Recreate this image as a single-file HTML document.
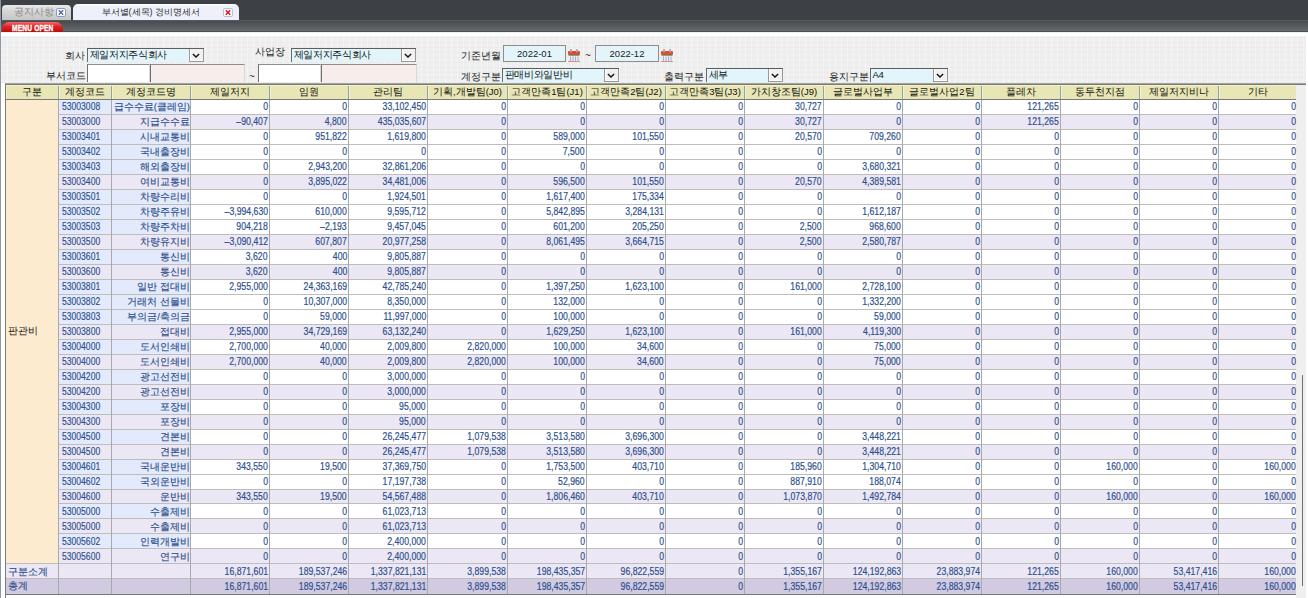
<!DOCTYPE html>
<html><head><meta charset="utf-8"><style>
*{margin:0;padding:0;box-sizing:border-box}
html,body{width:1308px;height:598px;overflow:hidden;background:#fff}
body{position:relative;font-family:"Liberation Sans",sans-serif;font-size:11px;color:#222}
.a{position:absolute}
.t{position:absolute;white-space:nowrap;line-height:15px}
.n{position:absolute;white-space:nowrap;line-height:15px;text-align:right;color:#2d4f8d;font-size:11px;transform:scaleX(0.79);transform-origin:100% 50%;-webkit-text-stroke:0.2px #2d4f8d}
.k{position:absolute;white-space:nowrap;line-height:15px;color:#2d4f8d;font-size:9.5px;-webkit-text-stroke:0.15px #2d4f8d}
.h{position:absolute;white-space:nowrap;line-height:14px;text-align:center;color:#111;font-size:9.5px}
.lbl{position:absolute;white-space:nowrap;font-size:10px;color:#222;line-height:14px}
.inp{position:absolute;border-top:1px solid #8d8d8d;border-left:1px solid #707070;border-right:1px solid #d8d8d8;background:#fff}
.cmb{position:absolute;border-top:1px solid #5e5e5e;border-left:1px solid #6a6a6a;background:#e2f5fb;font-size:9.5px;line-height:11px;padding-left:1.5px;color:#111;letter-spacing:-0.3px}
.btn{position:absolute;top:0;right:0;width:15px;height:13px;background:#f1f1f1;border:1px solid #999;border-top:none;box-shadow:inset 1px 0 #fff, inset 0 -1px #fff}
.btn svg{position:absolute;left:2px;top:3.5px}
</style></head><body>

<div class="a" style="left:0;top:0;width:1px;height:598px;background:#8f97a6"></div>
<div class="a" style="left:1px;top:0;width:1307px;height:20px;background:#3d4045"></div>
<div class="a" style="left:2px;top:5px;width:69px;height:15px;border-radius:4px 4px 0 0;background:linear-gradient(#eaeaea,#d6d6d6 40%,#c6c6c6)"></div>
<div class="t" style="left:14px;top:3.5px;font-size:9.5px;color:#8a8a8a;line-height:16px">공지사항</div>
<svg class="a" style="left:56px;top:8px" width="10" height="9" viewBox="0 0 10 9"><rect x="0.5" y="0.5" width="9" height="8" rx="1.5" fill="#fbfcfe" stroke="#8e9cba"/><path d="M2.8 2.3L7.2 6.7M7.2 2.3L2.8 6.7" stroke="#4a66ae" stroke-width="1.3"/></svg>
<div class="a" style="left:73px;top:4px;width:166px;height:16px;border-radius:5px 5px 0 0;background:linear-gradient(#fbfcff 0,#fbfcff 1px,#edf1fb 2px)"></div>
<div class="t" style="left:101.5px;top:4px;font-size:9.2px;color:#333;line-height:16px">부서별(세목) 경비명세서</div>
<svg class="a" style="left:223px;top:8px" width="10" height="9" viewBox="0 0 10 9"><rect x="0.5" y="0.5" width="9" height="8" rx="1.5" fill="#fdfeff" stroke="#b9c1cd"/><path d="M2.8 2.3L7.2 6.7M7.2 2.3L2.8 6.7" stroke="#e8121e" stroke-width="1.5"/></svg>
<div class="a" style="left:1px;top:20px;width:1307px;height:12px;background:linear-gradient(#55585c 0,#55585c 1px,#474a4e 1px,#676a6d 11px,#4e5154 11px)"></div>
<div class="a" style="left:2px;top:22px;width:61px;height:10px;border-radius:7px 7px 0 0/8px 8px 0 0;background:linear-gradient(#f46a6a,#e02424 45%,#b80d0d)"></div>
<div class="t" style="left:11.5px;top:22.5px;font-size:8.5px;color:#fff;line-height:10px;font-weight:bold;letter-spacing:0.2px;-webkit-text-stroke:0.35px #fff;transform:scaleX(0.78);transform-origin:0 50%">MENU OPEN</div>
<div class="a" style="left:1px;top:32px;width:1307px;height:1px;background:#e6f3f3"></div>
<div class="a" style="left:1px;top:36px;width:1305px;height:47px;background:repeating-linear-gradient(90deg,rgba(255,255,255,.35) 0 1px,transparent 1px 6px),repeating-linear-gradient(0deg,rgba(0,0,0,.018) 0 1px,transparent 1px 5px),#efefef"></div>
<div class="lbl" style="left:64.5px;top:48.5px">회사</div>
<div class="cmb" style="left:87px;top:48px;width:117px;height:14px">제일저지주식회사<div class="btn"><svg width="8" height="5" viewBox="0 0 8 5"><path d="M0.9 0.9 L4 4 L7.1 0.9" stroke="#151515" stroke-width="1.45" fill="none"/></svg></div></div>
<div class="lbl" style="left:45.5px;top:68.5px">부서코드</div>
<div class="inp" style="left:87px;top:64px;width:63px;height:18px"></div>
<div class="inp" style="left:150px;top:64px;width:95px;height:18px;background:#f7eeeb"></div>
<div class="t" style="left:249px;top:69px;font-size:10px;color:#333">~</div>
<div class="inp" style="left:258px;top:64px;width:63px;height:18px"></div>
<div class="inp" style="left:321px;top:64px;width:96px;height:18px;background:#f7eeeb"></div>
<div class="lbl" style="left:255px;top:45px">사업장</div>
<div class="cmb" style="left:291px;top:48px;width:125px;height:14px">제일저지주식회사<div class="btn"><svg width="8" height="5" viewBox="0 0 8 5"><path d="M0.9 0.9 L4 4 L7.1 0.9" stroke="#151515" stroke-width="1.45" fill="none"/></svg></div></div>
<div class="lbl" style="left:460.5px;top:49px">기준년월</div>
<div class="inp" style="left:503px;top:45px;width:63px;height:17px;border:1px solid #8e8e8e;background:#e3f5fb;text-align:center;font-size:9.5px;line-height:15px;color:#222">2022-01</div>
<svg class="a" style="left:568px;top:49px" width="12" height="13" viewBox="0 0 12 13"><rect x="0" y="2" width="12" height="11" rx="1" fill="#e9eef7"/><rect x="0" y="2" width="12" height="4" rx="1" fill="#e2483a"/><rect x="0.5" y="6" width="11" height="1" fill="#62b865"/><path d="M2.5 7.5V12M5 7.5V12M7.5 7.5V12M10 7.5V12" stroke="#9db0cf" stroke-width="1"/><rect x="0" y="12" width="12" height="1" fill="#e98a84"/><rect x="2" y="0" width="2" height="3.5" rx="1" fill="#a9a9a9"/><rect x="8" y="0" width="2" height="3.5" rx="1" fill="#a9a9a9"/></svg>
<div class="t" style="left:585px;top:48px;font-size:10px;color:#333">~</div>
<div class="inp" style="left:595px;top:45px;width:64px;height:17px;border:1px solid #8e8e8e;background:#e3f5fb;text-align:center;font-size:9.5px;line-height:15px;color:#222">2022-12</div>
<svg class="a" style="left:661px;top:49px" width="12" height="13" viewBox="0 0 12 13"><rect x="0" y="2" width="12" height="11" rx="1" fill="#e9eef7"/><rect x="0" y="2" width="12" height="4" rx="1" fill="#e2483a"/><rect x="0.5" y="6" width="11" height="1" fill="#62b865"/><path d="M2.5 7.5V12M5 7.5V12M7.5 7.5V12M10 7.5V12" stroke="#9db0cf" stroke-width="1"/><rect x="0" y="12" width="12" height="1" fill="#e98a84"/><rect x="2" y="0" width="2" height="3.5" rx="1" fill="#a9a9a9"/><rect x="8" y="0" width="2" height="3.5" rx="1" fill="#a9a9a9"/></svg>
<div class="lbl" style="left:460.5px;top:69.5px">계정구분</div>
<div class="cmb" style="left:502px;top:68px;width:117px;height:14px">판매비와일반비<div class="btn"><svg width="8" height="5" viewBox="0 0 8 5"><path d="M0.9 0.9 L4 4 L7.1 0.9" stroke="#151515" stroke-width="1.45" fill="none"/></svg></div></div>
<div class="lbl" style="left:663.7px;top:69.5px">출력구분</div>
<div class="cmb" style="left:706px;top:68px;width:77px;height:14px">세부<div class="btn"><svg width="8" height="5" viewBox="0 0 8 5"><path d="M0.9 0.9 L4 4 L7.1 0.9" stroke="#151515" stroke-width="1.45" fill="none"/></svg></div></div>
<div class="lbl" style="left:828.5px;top:69.5px">용지구분</div>
<div class="cmb" style="left:870px;top:68px;width:78px;height:14px">A4<div class="btn"><svg width="8" height="5" viewBox="0 0 8 5"><path d="M0.9 0.9 L4 4 L7.1 0.9" stroke="#151515" stroke-width="1.45" fill="none"/></svg></div></div>
<div class="a" style="left:1296px;top:85px;width:10px;height:513px;background:#efefef"></div>
<div class="a" style="left:1302px;top:375px;width:1px;height:211px;background:#6e6e6e"></div>
<div class="a" style="left:6px;top:85px;width:1290px;height:14px;background:#e8e6b4"></div>
<div class="a" style="left:6px;top:85px;width:1px;height:14px;background:#f5f3c6"></div>
<div class="a" style="left:58px;top:85px;width:1px;height:14px;background:#8ea2b6"></div>
<div class="h" style="left:6px;top:85px;width:52px">구분</div>
<div class="a" style="left:59px;top:85px;width:1px;height:14px;background:#f5f3c6"></div>
<div class="a" style="left:111px;top:85px;width:1px;height:14px;background:#8ea2b6"></div>
<div class="h" style="left:59px;top:85px;width:52px">계정코드</div>
<div class="a" style="left:112px;top:85px;width:1px;height:14px;background:#f5f3c6"></div>
<div class="a" style="left:190px;top:85px;width:1px;height:14px;background:#8ea2b6"></div>
<div class="h" style="left:112px;top:85px;width:78px">계정코드명</div>
<div class="a" style="left:191px;top:85px;width:1px;height:14px;background:#f5f3c6"></div>
<div class="a" style="left:269px;top:85px;width:1px;height:14px;background:#8ea2b6"></div>
<div class="h" style="left:191px;top:85px;width:78px">제일저지</div>
<div class="a" style="left:270px;top:85px;width:1px;height:14px;background:#f5f3c6"></div>
<div class="a" style="left:348px;top:85px;width:1px;height:14px;background:#8ea2b6"></div>
<div class="h" style="left:270px;top:85px;width:78px">임원</div>
<div class="a" style="left:349px;top:85px;width:1px;height:14px;background:#f5f3c6"></div>
<div class="a" style="left:427px;top:85px;width:1px;height:14px;background:#8ea2b6"></div>
<div class="h" style="left:349px;top:85px;width:78px">관리팀</div>
<div class="a" style="left:428px;top:85px;width:1px;height:14px;background:#f5f3c6"></div>
<div class="a" style="left:507px;top:85px;width:1px;height:14px;background:#8ea2b6"></div>
<div class="h" style="left:428px;top:85px;width:79px">기획,개발팀(J0)</div>
<div class="a" style="left:508px;top:85px;width:1px;height:14px;background:#f5f3c6"></div>
<div class="a" style="left:586px;top:85px;width:1px;height:14px;background:#8ea2b6"></div>
<div class="h" style="left:508px;top:85px;width:78px">고객만족1팀(J1)</div>
<div class="a" style="left:587px;top:85px;width:1px;height:14px;background:#f5f3c6"></div>
<div class="a" style="left:665px;top:85px;width:1px;height:14px;background:#8ea2b6"></div>
<div class="h" style="left:587px;top:85px;width:78px">고객만족2팀(J2)</div>
<div class="a" style="left:666px;top:85px;width:1px;height:14px;background:#f5f3c6"></div>
<div class="a" style="left:744px;top:85px;width:1px;height:14px;background:#8ea2b6"></div>
<div class="h" style="left:666px;top:85px;width:78px">고객만족3팀(J3)</div>
<div class="a" style="left:745px;top:85px;width:1px;height:14px;background:#f5f3c6"></div>
<div class="a" style="left:823px;top:85px;width:1px;height:14px;background:#8ea2b6"></div>
<div class="h" style="left:745px;top:85px;width:78px">가치창조팀(J9)</div>
<div class="a" style="left:824px;top:85px;width:1px;height:14px;background:#f5f3c6"></div>
<div class="a" style="left:902px;top:85px;width:1px;height:14px;background:#8ea2b6"></div>
<div class="h" style="left:824px;top:85px;width:78px">글로벌사업부</div>
<div class="a" style="left:903px;top:85px;width:1px;height:14px;background:#f5f3c6"></div>
<div class="a" style="left:981px;top:85px;width:1px;height:14px;background:#8ea2b6"></div>
<div class="h" style="left:903px;top:85px;width:78px">글로벌사업2팀</div>
<div class="a" style="left:982px;top:85px;width:1px;height:14px;background:#f5f3c6"></div>
<div class="a" style="left:1060px;top:85px;width:1px;height:14px;background:#8ea2b6"></div>
<div class="h" style="left:982px;top:85px;width:78px">플레차</div>
<div class="a" style="left:1061px;top:85px;width:1px;height:14px;background:#f5f3c6"></div>
<div class="a" style="left:1139px;top:85px;width:1px;height:14px;background:#8ea2b6"></div>
<div class="h" style="left:1061px;top:85px;width:78px">동두천지점</div>
<div class="a" style="left:1140px;top:85px;width:1px;height:14px;background:#f5f3c6"></div>
<div class="a" style="left:1218px;top:85px;width:1px;height:14px;background:#8ea2b6"></div>
<div class="h" style="left:1140px;top:85px;width:78px">제일저지비나</div>
<div class="a" style="left:1219px;top:85px;width:1px;height:14px;background:#f5f3c6"></div>
<div class="h" style="left:1219px;top:85px;width:77px">기타</div>
<div class="a" style="left:6px;top:85px;width:1290px;height:1px;background:#f5f3c6"></div>
<div class="a" style="left:5px;top:83px;width:1301px;height:1px;background:#a4a4a4"></div>
<div class="a" style="left:5px;top:84px;width:1301px;height:1px;background:#777a7c"></div>
<div class="a" style="left:5px;top:99px;width:1291px;height:1px;background:#777a7c"></div>
<div class="a" style="left:59px;top:100px;width:131px;height:14px;background:#e3eafb"></div>
<div class="a" style="left:191px;top:100px;width:1105px;height:14px;background:#ffffff"></div>
<div class="a" style="left:59px;top:114px;width:1237px;height:1px;background:#bdbdbd"></div>
<div class="k" style="left:62px;top:99px"><span style="font-size:11px;display:inline-block;transform:scaleX(0.78);transform-origin:0 50%">53003008</span></div>
<div class="k" style="right:1118px;top:99px">급수수료(클레임)</div>
<div class="n" style="right:1040px;top:99px">0</div>
<div class="n" style="right:961px;top:99px">0</div>
<div class="n" style="right:882px;top:99px">33,102,450</div>
<div class="n" style="right:802px;top:99px">0</div>
<div class="n" style="right:723px;top:99px">0</div>
<div class="n" style="right:644px;top:99px">0</div>
<div class="n" style="right:565px;top:99px">0</div>
<div class="n" style="right:486px;top:99px">30,727</div>
<div class="n" style="right:407px;top:99px">0</div>
<div class="n" style="right:328px;top:99px">0</div>
<div class="n" style="right:249px;top:99px">121,265</div>
<div class="n" style="right:170px;top:99px">0</div>
<div class="n" style="right:91px;top:99px">0</div>
<div class="n" style="right:12px;top:99px">0</div>
<div class="a" style="left:59px;top:115px;width:131px;height:14px;background:#ece7f4"></div>
<div class="a" style="left:191px;top:115px;width:1105px;height:14px;background:#ece7f4"></div>
<div class="a" style="left:59px;top:129px;width:1237px;height:1px;background:#bdbdbd"></div>
<div class="k" style="left:62px;top:114px"><span style="font-size:11px;display:inline-block;transform:scaleX(0.78);transform-origin:0 50%">53003000</span></div>
<div class="k" style="right:1118px;top:114px">지급수수료</div>
<div class="n" style="right:1040px;top:114px">&#8211;90,407</div>
<div class="n" style="right:961px;top:114px">4,800</div>
<div class="n" style="right:882px;top:114px">435,035,607</div>
<div class="n" style="right:802px;top:114px">0</div>
<div class="n" style="right:723px;top:114px">0</div>
<div class="n" style="right:644px;top:114px">0</div>
<div class="n" style="right:565px;top:114px">0</div>
<div class="n" style="right:486px;top:114px">30,727</div>
<div class="n" style="right:407px;top:114px">0</div>
<div class="n" style="right:328px;top:114px">0</div>
<div class="n" style="right:249px;top:114px">121,265</div>
<div class="n" style="right:170px;top:114px">0</div>
<div class="n" style="right:91px;top:114px">0</div>
<div class="n" style="right:12px;top:114px">0</div>
<div class="a" style="left:59px;top:130px;width:131px;height:14px;background:#e3eafb"></div>
<div class="a" style="left:191px;top:130px;width:1105px;height:14px;background:#ffffff"></div>
<div class="a" style="left:59px;top:144px;width:1237px;height:1px;background:#bdbdbd"></div>
<div class="k" style="left:62px;top:129px"><span style="font-size:11px;display:inline-block;transform:scaleX(0.78);transform-origin:0 50%">53003401</span></div>
<div class="k" style="right:1118px;top:129px">시내교통비</div>
<div class="n" style="right:1040px;top:129px">0</div>
<div class="n" style="right:961px;top:129px">951,822</div>
<div class="n" style="right:882px;top:129px">1,619,800</div>
<div class="n" style="right:802px;top:129px">0</div>
<div class="n" style="right:723px;top:129px">589,000</div>
<div class="n" style="right:644px;top:129px">101,550</div>
<div class="n" style="right:565px;top:129px">0</div>
<div class="n" style="right:486px;top:129px">20,570</div>
<div class="n" style="right:407px;top:129px">709,260</div>
<div class="n" style="right:328px;top:129px">0</div>
<div class="n" style="right:249px;top:129px">0</div>
<div class="n" style="right:170px;top:129px">0</div>
<div class="n" style="right:91px;top:129px">0</div>
<div class="n" style="right:12px;top:129px">0</div>
<div class="a" style="left:59px;top:145px;width:131px;height:14px;background:#e3eafb"></div>
<div class="a" style="left:191px;top:145px;width:1105px;height:14px;background:#ffffff"></div>
<div class="a" style="left:59px;top:159px;width:1237px;height:1px;background:#bdbdbd"></div>
<div class="k" style="left:62px;top:144px"><span style="font-size:11px;display:inline-block;transform:scaleX(0.78);transform-origin:0 50%">53003402</span></div>
<div class="k" style="right:1118px;top:144px">국내출장비</div>
<div class="n" style="right:1040px;top:144px">0</div>
<div class="n" style="right:961px;top:144px">0</div>
<div class="n" style="right:882px;top:144px">0</div>
<div class="n" style="right:802px;top:144px">0</div>
<div class="n" style="right:723px;top:144px">7,500</div>
<div class="n" style="right:644px;top:144px">0</div>
<div class="n" style="right:565px;top:144px">0</div>
<div class="n" style="right:486px;top:144px">0</div>
<div class="n" style="right:407px;top:144px">0</div>
<div class="n" style="right:328px;top:144px">0</div>
<div class="n" style="right:249px;top:144px">0</div>
<div class="n" style="right:170px;top:144px">0</div>
<div class="n" style="right:91px;top:144px">0</div>
<div class="n" style="right:12px;top:144px">0</div>
<div class="a" style="left:59px;top:160px;width:131px;height:14px;background:#e3eafb"></div>
<div class="a" style="left:191px;top:160px;width:1105px;height:14px;background:#ffffff"></div>
<div class="a" style="left:59px;top:174px;width:1237px;height:1px;background:#bdbdbd"></div>
<div class="k" style="left:62px;top:159px"><span style="font-size:11px;display:inline-block;transform:scaleX(0.78);transform-origin:0 50%">53003403</span></div>
<div class="k" style="right:1118px;top:159px">해외출장비</div>
<div class="n" style="right:1040px;top:159px">0</div>
<div class="n" style="right:961px;top:159px">2,943,200</div>
<div class="n" style="right:882px;top:159px">32,861,206</div>
<div class="n" style="right:802px;top:159px">0</div>
<div class="n" style="right:723px;top:159px">0</div>
<div class="n" style="right:644px;top:159px">0</div>
<div class="n" style="right:565px;top:159px">0</div>
<div class="n" style="right:486px;top:159px">0</div>
<div class="n" style="right:407px;top:159px">3,680,321</div>
<div class="n" style="right:328px;top:159px">0</div>
<div class="n" style="right:249px;top:159px">0</div>
<div class="n" style="right:170px;top:159px">0</div>
<div class="n" style="right:91px;top:159px">0</div>
<div class="n" style="right:12px;top:159px">0</div>
<div class="a" style="left:59px;top:175px;width:131px;height:14px;background:#ece7f4"></div>
<div class="a" style="left:191px;top:175px;width:1105px;height:14px;background:#ece7f4"></div>
<div class="a" style="left:59px;top:189px;width:1237px;height:1px;background:#bdbdbd"></div>
<div class="k" style="left:62px;top:174px"><span style="font-size:11px;display:inline-block;transform:scaleX(0.78);transform-origin:0 50%">53003400</span></div>
<div class="k" style="right:1118px;top:174px">여비교통비</div>
<div class="n" style="right:1040px;top:174px">0</div>
<div class="n" style="right:961px;top:174px">3,895,022</div>
<div class="n" style="right:882px;top:174px">34,481,006</div>
<div class="n" style="right:802px;top:174px">0</div>
<div class="n" style="right:723px;top:174px">596,500</div>
<div class="n" style="right:644px;top:174px">101,550</div>
<div class="n" style="right:565px;top:174px">0</div>
<div class="n" style="right:486px;top:174px">20,570</div>
<div class="n" style="right:407px;top:174px">4,389,581</div>
<div class="n" style="right:328px;top:174px">0</div>
<div class="n" style="right:249px;top:174px">0</div>
<div class="n" style="right:170px;top:174px">0</div>
<div class="n" style="right:91px;top:174px">0</div>
<div class="n" style="right:12px;top:174px">0</div>
<div class="a" style="left:59px;top:190px;width:131px;height:14px;background:#e3eafb"></div>
<div class="a" style="left:191px;top:190px;width:1105px;height:14px;background:#ffffff"></div>
<div class="a" style="left:59px;top:204px;width:1237px;height:1px;background:#bdbdbd"></div>
<div class="k" style="left:62px;top:189px"><span style="font-size:11px;display:inline-block;transform:scaleX(0.78);transform-origin:0 50%">53003501</span></div>
<div class="k" style="right:1118px;top:189px">차량수리비</div>
<div class="n" style="right:1040px;top:189px">0</div>
<div class="n" style="right:961px;top:189px">0</div>
<div class="n" style="right:882px;top:189px">1,924,501</div>
<div class="n" style="right:802px;top:189px">0</div>
<div class="n" style="right:723px;top:189px">1,617,400</div>
<div class="n" style="right:644px;top:189px">175,334</div>
<div class="n" style="right:565px;top:189px">0</div>
<div class="n" style="right:486px;top:189px">0</div>
<div class="n" style="right:407px;top:189px">0</div>
<div class="n" style="right:328px;top:189px">0</div>
<div class="n" style="right:249px;top:189px">0</div>
<div class="n" style="right:170px;top:189px">0</div>
<div class="n" style="right:91px;top:189px">0</div>
<div class="n" style="right:12px;top:189px">0</div>
<div class="a" style="left:59px;top:205px;width:131px;height:14px;background:#e3eafb"></div>
<div class="a" style="left:191px;top:205px;width:1105px;height:14px;background:#ffffff"></div>
<div class="a" style="left:59px;top:219px;width:1237px;height:1px;background:#bdbdbd"></div>
<div class="k" style="left:62px;top:204px"><span style="font-size:11px;display:inline-block;transform:scaleX(0.78);transform-origin:0 50%">53003502</span></div>
<div class="k" style="right:1118px;top:204px">차량주유비</div>
<div class="n" style="right:1040px;top:204px">&#8211;3,994,630</div>
<div class="n" style="right:961px;top:204px">610,000</div>
<div class="n" style="right:882px;top:204px">9,595,712</div>
<div class="n" style="right:802px;top:204px">0</div>
<div class="n" style="right:723px;top:204px">5,842,895</div>
<div class="n" style="right:644px;top:204px">3,284,131</div>
<div class="n" style="right:565px;top:204px">0</div>
<div class="n" style="right:486px;top:204px">0</div>
<div class="n" style="right:407px;top:204px">1,612,187</div>
<div class="n" style="right:328px;top:204px">0</div>
<div class="n" style="right:249px;top:204px">0</div>
<div class="n" style="right:170px;top:204px">0</div>
<div class="n" style="right:91px;top:204px">0</div>
<div class="n" style="right:12px;top:204px">0</div>
<div class="a" style="left:59px;top:220px;width:131px;height:14px;background:#e3eafb"></div>
<div class="a" style="left:191px;top:220px;width:1105px;height:14px;background:#ffffff"></div>
<div class="a" style="left:59px;top:234px;width:1237px;height:1px;background:#bdbdbd"></div>
<div class="k" style="left:62px;top:219px"><span style="font-size:11px;display:inline-block;transform:scaleX(0.78);transform-origin:0 50%">53003503</span></div>
<div class="k" style="right:1118px;top:219px">차량주차비</div>
<div class="n" style="right:1040px;top:219px">904,218</div>
<div class="n" style="right:961px;top:219px">&#8211;2,193</div>
<div class="n" style="right:882px;top:219px">9,457,045</div>
<div class="n" style="right:802px;top:219px">0</div>
<div class="n" style="right:723px;top:219px">601,200</div>
<div class="n" style="right:644px;top:219px">205,250</div>
<div class="n" style="right:565px;top:219px">0</div>
<div class="n" style="right:486px;top:219px">2,500</div>
<div class="n" style="right:407px;top:219px">968,600</div>
<div class="n" style="right:328px;top:219px">0</div>
<div class="n" style="right:249px;top:219px">0</div>
<div class="n" style="right:170px;top:219px">0</div>
<div class="n" style="right:91px;top:219px">0</div>
<div class="n" style="right:12px;top:219px">0</div>
<div class="a" style="left:59px;top:235px;width:131px;height:14px;background:#ece7f4"></div>
<div class="a" style="left:191px;top:235px;width:1105px;height:14px;background:#ece7f4"></div>
<div class="a" style="left:59px;top:249px;width:1237px;height:1px;background:#bdbdbd"></div>
<div class="k" style="left:62px;top:234px"><span style="font-size:11px;display:inline-block;transform:scaleX(0.78);transform-origin:0 50%">53003500</span></div>
<div class="k" style="right:1118px;top:234px">차량유지비</div>
<div class="n" style="right:1040px;top:234px">&#8211;3,090,412</div>
<div class="n" style="right:961px;top:234px">607,807</div>
<div class="n" style="right:882px;top:234px">20,977,258</div>
<div class="n" style="right:802px;top:234px">0</div>
<div class="n" style="right:723px;top:234px">8,061,495</div>
<div class="n" style="right:644px;top:234px">3,664,715</div>
<div class="n" style="right:565px;top:234px">0</div>
<div class="n" style="right:486px;top:234px">2,500</div>
<div class="n" style="right:407px;top:234px">2,580,787</div>
<div class="n" style="right:328px;top:234px">0</div>
<div class="n" style="right:249px;top:234px">0</div>
<div class="n" style="right:170px;top:234px">0</div>
<div class="n" style="right:91px;top:234px">0</div>
<div class="n" style="right:12px;top:234px">0</div>
<div class="a" style="left:59px;top:250px;width:131px;height:14px;background:#e3eafb"></div>
<div class="a" style="left:191px;top:250px;width:1105px;height:14px;background:#ffffff"></div>
<div class="a" style="left:59px;top:264px;width:1237px;height:1px;background:#bdbdbd"></div>
<div class="k" style="left:62px;top:249px"><span style="font-size:11px;display:inline-block;transform:scaleX(0.78);transform-origin:0 50%">53003601</span></div>
<div class="k" style="right:1118px;top:249px">통신비</div>
<div class="n" style="right:1040px;top:249px">3,620</div>
<div class="n" style="right:961px;top:249px">400</div>
<div class="n" style="right:882px;top:249px">9,805,887</div>
<div class="n" style="right:802px;top:249px">0</div>
<div class="n" style="right:723px;top:249px">0</div>
<div class="n" style="right:644px;top:249px">0</div>
<div class="n" style="right:565px;top:249px">0</div>
<div class="n" style="right:486px;top:249px">0</div>
<div class="n" style="right:407px;top:249px">0</div>
<div class="n" style="right:328px;top:249px">0</div>
<div class="n" style="right:249px;top:249px">0</div>
<div class="n" style="right:170px;top:249px">0</div>
<div class="n" style="right:91px;top:249px">0</div>
<div class="n" style="right:12px;top:249px">0</div>
<div class="a" style="left:59px;top:265px;width:131px;height:14px;background:#ece7f4"></div>
<div class="a" style="left:191px;top:265px;width:1105px;height:14px;background:#ece7f4"></div>
<div class="a" style="left:59px;top:279px;width:1237px;height:1px;background:#bdbdbd"></div>
<div class="k" style="left:62px;top:264px"><span style="font-size:11px;display:inline-block;transform:scaleX(0.78);transform-origin:0 50%">53003600</span></div>
<div class="k" style="right:1118px;top:264px">통신비</div>
<div class="n" style="right:1040px;top:264px">3,620</div>
<div class="n" style="right:961px;top:264px">400</div>
<div class="n" style="right:882px;top:264px">9,805,887</div>
<div class="n" style="right:802px;top:264px">0</div>
<div class="n" style="right:723px;top:264px">0</div>
<div class="n" style="right:644px;top:264px">0</div>
<div class="n" style="right:565px;top:264px">0</div>
<div class="n" style="right:486px;top:264px">0</div>
<div class="n" style="right:407px;top:264px">0</div>
<div class="n" style="right:328px;top:264px">0</div>
<div class="n" style="right:249px;top:264px">0</div>
<div class="n" style="right:170px;top:264px">0</div>
<div class="n" style="right:91px;top:264px">0</div>
<div class="n" style="right:12px;top:264px">0</div>
<div class="a" style="left:59px;top:280px;width:131px;height:14px;background:#e3eafb"></div>
<div class="a" style="left:191px;top:280px;width:1105px;height:14px;background:#ffffff"></div>
<div class="a" style="left:59px;top:294px;width:1237px;height:1px;background:#bdbdbd"></div>
<div class="k" style="left:62px;top:279px"><span style="font-size:11px;display:inline-block;transform:scaleX(0.78);transform-origin:0 50%">53003801</span></div>
<div class="k" style="right:1118px;top:279px">일반 접대비</div>
<div class="n" style="right:1040px;top:279px">2,955,000</div>
<div class="n" style="right:961px;top:279px">24,363,169</div>
<div class="n" style="right:882px;top:279px">42,785,240</div>
<div class="n" style="right:802px;top:279px">0</div>
<div class="n" style="right:723px;top:279px">1,397,250</div>
<div class="n" style="right:644px;top:279px">1,623,100</div>
<div class="n" style="right:565px;top:279px">0</div>
<div class="n" style="right:486px;top:279px">161,000</div>
<div class="n" style="right:407px;top:279px">2,728,100</div>
<div class="n" style="right:328px;top:279px">0</div>
<div class="n" style="right:249px;top:279px">0</div>
<div class="n" style="right:170px;top:279px">0</div>
<div class="n" style="right:91px;top:279px">0</div>
<div class="n" style="right:12px;top:279px">0</div>
<div class="a" style="left:59px;top:295px;width:131px;height:14px;background:#e3eafb"></div>
<div class="a" style="left:191px;top:295px;width:1105px;height:14px;background:#ffffff"></div>
<div class="a" style="left:59px;top:309px;width:1237px;height:1px;background:#bdbdbd"></div>
<div class="k" style="left:62px;top:294px"><span style="font-size:11px;display:inline-block;transform:scaleX(0.78);transform-origin:0 50%">53003802</span></div>
<div class="k" style="right:1118px;top:294px">거래처 선물비</div>
<div class="n" style="right:1040px;top:294px">0</div>
<div class="n" style="right:961px;top:294px">10,307,000</div>
<div class="n" style="right:882px;top:294px">8,350,000</div>
<div class="n" style="right:802px;top:294px">0</div>
<div class="n" style="right:723px;top:294px">132,000</div>
<div class="n" style="right:644px;top:294px">0</div>
<div class="n" style="right:565px;top:294px">0</div>
<div class="n" style="right:486px;top:294px">0</div>
<div class="n" style="right:407px;top:294px">1,332,200</div>
<div class="n" style="right:328px;top:294px">0</div>
<div class="n" style="right:249px;top:294px">0</div>
<div class="n" style="right:170px;top:294px">0</div>
<div class="n" style="right:91px;top:294px">0</div>
<div class="n" style="right:12px;top:294px">0</div>
<div class="a" style="left:59px;top:310px;width:131px;height:14px;background:#e3eafb"></div>
<div class="a" style="left:191px;top:310px;width:1105px;height:14px;background:#ffffff"></div>
<div class="a" style="left:59px;top:324px;width:1237px;height:1px;background:#bdbdbd"></div>
<div class="k" style="left:62px;top:309px"><span style="font-size:11px;display:inline-block;transform:scaleX(0.78);transform-origin:0 50%">53003803</span></div>
<div class="k" style="right:1118px;top:309px">부의금/축의금</div>
<div class="n" style="right:1040px;top:309px">0</div>
<div class="n" style="right:961px;top:309px">59,000</div>
<div class="n" style="right:882px;top:309px">11,997,000</div>
<div class="n" style="right:802px;top:309px">0</div>
<div class="n" style="right:723px;top:309px">100,000</div>
<div class="n" style="right:644px;top:309px">0</div>
<div class="n" style="right:565px;top:309px">0</div>
<div class="n" style="right:486px;top:309px">0</div>
<div class="n" style="right:407px;top:309px">59,000</div>
<div class="n" style="right:328px;top:309px">0</div>
<div class="n" style="right:249px;top:309px">0</div>
<div class="n" style="right:170px;top:309px">0</div>
<div class="n" style="right:91px;top:309px">0</div>
<div class="n" style="right:12px;top:309px">0</div>
<div class="a" style="left:59px;top:325px;width:131px;height:14px;background:#ece7f4"></div>
<div class="a" style="left:191px;top:325px;width:1105px;height:14px;background:#ece7f4"></div>
<div class="a" style="left:59px;top:339px;width:1237px;height:1px;background:#bdbdbd"></div>
<div class="k" style="left:62px;top:324px"><span style="font-size:11px;display:inline-block;transform:scaleX(0.78);transform-origin:0 50%">53003800</span></div>
<div class="k" style="right:1118px;top:324px">접대비</div>
<div class="n" style="right:1040px;top:324px">2,955,000</div>
<div class="n" style="right:961px;top:324px">34,729,169</div>
<div class="n" style="right:882px;top:324px">63,132,240</div>
<div class="n" style="right:802px;top:324px">0</div>
<div class="n" style="right:723px;top:324px">1,629,250</div>
<div class="n" style="right:644px;top:324px">1,623,100</div>
<div class="n" style="right:565px;top:324px">0</div>
<div class="n" style="right:486px;top:324px">161,000</div>
<div class="n" style="right:407px;top:324px">4,119,300</div>
<div class="n" style="right:328px;top:324px">0</div>
<div class="n" style="right:249px;top:324px">0</div>
<div class="n" style="right:170px;top:324px">0</div>
<div class="n" style="right:91px;top:324px">0</div>
<div class="n" style="right:12px;top:324px">0</div>
<div class="a" style="left:59px;top:340px;width:131px;height:14px;background:#e3eafb"></div>
<div class="a" style="left:191px;top:340px;width:1105px;height:14px;background:#ffffff"></div>
<div class="a" style="left:59px;top:354px;width:1237px;height:1px;background:#bdbdbd"></div>
<div class="k" style="left:62px;top:339px"><span style="font-size:11px;display:inline-block;transform:scaleX(0.78);transform-origin:0 50%">53004000</span></div>
<div class="k" style="right:1118px;top:339px">도서인쇄비</div>
<div class="n" style="right:1040px;top:339px">2,700,000</div>
<div class="n" style="right:961px;top:339px">40,000</div>
<div class="n" style="right:882px;top:339px">2,009,800</div>
<div class="n" style="right:802px;top:339px">2,820,000</div>
<div class="n" style="right:723px;top:339px">100,000</div>
<div class="n" style="right:644px;top:339px">34,600</div>
<div class="n" style="right:565px;top:339px">0</div>
<div class="n" style="right:486px;top:339px">0</div>
<div class="n" style="right:407px;top:339px">75,000</div>
<div class="n" style="right:328px;top:339px">0</div>
<div class="n" style="right:249px;top:339px">0</div>
<div class="n" style="right:170px;top:339px">0</div>
<div class="n" style="right:91px;top:339px">0</div>
<div class="n" style="right:12px;top:339px">0</div>
<div class="a" style="left:59px;top:355px;width:131px;height:14px;background:#ece7f4"></div>
<div class="a" style="left:191px;top:355px;width:1105px;height:14px;background:#ece7f4"></div>
<div class="a" style="left:59px;top:369px;width:1237px;height:1px;background:#bdbdbd"></div>
<div class="k" style="left:62px;top:354px"><span style="font-size:11px;display:inline-block;transform:scaleX(0.78);transform-origin:0 50%">53004000</span></div>
<div class="k" style="right:1118px;top:354px">도서인쇄비</div>
<div class="n" style="right:1040px;top:354px">2,700,000</div>
<div class="n" style="right:961px;top:354px">40,000</div>
<div class="n" style="right:882px;top:354px">2,009,800</div>
<div class="n" style="right:802px;top:354px">2,820,000</div>
<div class="n" style="right:723px;top:354px">100,000</div>
<div class="n" style="right:644px;top:354px">34,600</div>
<div class="n" style="right:565px;top:354px">0</div>
<div class="n" style="right:486px;top:354px">0</div>
<div class="n" style="right:407px;top:354px">75,000</div>
<div class="n" style="right:328px;top:354px">0</div>
<div class="n" style="right:249px;top:354px">0</div>
<div class="n" style="right:170px;top:354px">0</div>
<div class="n" style="right:91px;top:354px">0</div>
<div class="n" style="right:12px;top:354px">0</div>
<div class="a" style="left:59px;top:370px;width:131px;height:14px;background:#e3eafb"></div>
<div class="a" style="left:191px;top:370px;width:1105px;height:14px;background:#ffffff"></div>
<div class="a" style="left:59px;top:384px;width:1237px;height:1px;background:#bdbdbd"></div>
<div class="k" style="left:62px;top:369px"><span style="font-size:11px;display:inline-block;transform:scaleX(0.78);transform-origin:0 50%">53004200</span></div>
<div class="k" style="right:1118px;top:369px">광고선전비</div>
<div class="n" style="right:1040px;top:369px">0</div>
<div class="n" style="right:961px;top:369px">0</div>
<div class="n" style="right:882px;top:369px">3,000,000</div>
<div class="n" style="right:802px;top:369px">0</div>
<div class="n" style="right:723px;top:369px">0</div>
<div class="n" style="right:644px;top:369px">0</div>
<div class="n" style="right:565px;top:369px">0</div>
<div class="n" style="right:486px;top:369px">0</div>
<div class="n" style="right:407px;top:369px">0</div>
<div class="n" style="right:328px;top:369px">0</div>
<div class="n" style="right:249px;top:369px">0</div>
<div class="n" style="right:170px;top:369px">0</div>
<div class="n" style="right:91px;top:369px">0</div>
<div class="n" style="right:12px;top:369px">0</div>
<div class="a" style="left:59px;top:385px;width:131px;height:14px;background:#ece7f4"></div>
<div class="a" style="left:191px;top:385px;width:1105px;height:14px;background:#ece7f4"></div>
<div class="a" style="left:59px;top:399px;width:1237px;height:1px;background:#bdbdbd"></div>
<div class="k" style="left:62px;top:384px"><span style="font-size:11px;display:inline-block;transform:scaleX(0.78);transform-origin:0 50%">53004200</span></div>
<div class="k" style="right:1118px;top:384px">광고선전비</div>
<div class="n" style="right:1040px;top:384px">0</div>
<div class="n" style="right:961px;top:384px">0</div>
<div class="n" style="right:882px;top:384px">3,000,000</div>
<div class="n" style="right:802px;top:384px">0</div>
<div class="n" style="right:723px;top:384px">0</div>
<div class="n" style="right:644px;top:384px">0</div>
<div class="n" style="right:565px;top:384px">0</div>
<div class="n" style="right:486px;top:384px">0</div>
<div class="n" style="right:407px;top:384px">0</div>
<div class="n" style="right:328px;top:384px">0</div>
<div class="n" style="right:249px;top:384px">0</div>
<div class="n" style="right:170px;top:384px">0</div>
<div class="n" style="right:91px;top:384px">0</div>
<div class="n" style="right:12px;top:384px">0</div>
<div class="a" style="left:59px;top:400px;width:131px;height:14px;background:#e3eafb"></div>
<div class="a" style="left:191px;top:400px;width:1105px;height:14px;background:#ffffff"></div>
<div class="a" style="left:59px;top:414px;width:1237px;height:1px;background:#bdbdbd"></div>
<div class="k" style="left:62px;top:399px"><span style="font-size:11px;display:inline-block;transform:scaleX(0.78);transform-origin:0 50%">53004300</span></div>
<div class="k" style="right:1118px;top:399px">포장비</div>
<div class="n" style="right:1040px;top:399px">0</div>
<div class="n" style="right:961px;top:399px">0</div>
<div class="n" style="right:882px;top:399px">95,000</div>
<div class="n" style="right:802px;top:399px">0</div>
<div class="n" style="right:723px;top:399px">0</div>
<div class="n" style="right:644px;top:399px">0</div>
<div class="n" style="right:565px;top:399px">0</div>
<div class="n" style="right:486px;top:399px">0</div>
<div class="n" style="right:407px;top:399px">0</div>
<div class="n" style="right:328px;top:399px">0</div>
<div class="n" style="right:249px;top:399px">0</div>
<div class="n" style="right:170px;top:399px">0</div>
<div class="n" style="right:91px;top:399px">0</div>
<div class="n" style="right:12px;top:399px">0</div>
<div class="a" style="left:59px;top:415px;width:131px;height:14px;background:#ece7f4"></div>
<div class="a" style="left:191px;top:415px;width:1105px;height:14px;background:#ece7f4"></div>
<div class="a" style="left:59px;top:429px;width:1237px;height:1px;background:#bdbdbd"></div>
<div class="k" style="left:62px;top:414px"><span style="font-size:11px;display:inline-block;transform:scaleX(0.78);transform-origin:0 50%">53004300</span></div>
<div class="k" style="right:1118px;top:414px">포장비</div>
<div class="n" style="right:1040px;top:414px">0</div>
<div class="n" style="right:961px;top:414px">0</div>
<div class="n" style="right:882px;top:414px">95,000</div>
<div class="n" style="right:802px;top:414px">0</div>
<div class="n" style="right:723px;top:414px">0</div>
<div class="n" style="right:644px;top:414px">0</div>
<div class="n" style="right:565px;top:414px">0</div>
<div class="n" style="right:486px;top:414px">0</div>
<div class="n" style="right:407px;top:414px">0</div>
<div class="n" style="right:328px;top:414px">0</div>
<div class="n" style="right:249px;top:414px">0</div>
<div class="n" style="right:170px;top:414px">0</div>
<div class="n" style="right:91px;top:414px">0</div>
<div class="n" style="right:12px;top:414px">0</div>
<div class="a" style="left:59px;top:430px;width:131px;height:14px;background:#e3eafb"></div>
<div class="a" style="left:191px;top:430px;width:1105px;height:14px;background:#ffffff"></div>
<div class="a" style="left:59px;top:444px;width:1237px;height:1px;background:#bdbdbd"></div>
<div class="k" style="left:62px;top:429px"><span style="font-size:11px;display:inline-block;transform:scaleX(0.78);transform-origin:0 50%">53004500</span></div>
<div class="k" style="right:1118px;top:429px">견본비</div>
<div class="n" style="right:1040px;top:429px">0</div>
<div class="n" style="right:961px;top:429px">0</div>
<div class="n" style="right:882px;top:429px">26,245,477</div>
<div class="n" style="right:802px;top:429px">1,079,538</div>
<div class="n" style="right:723px;top:429px">3,513,580</div>
<div class="n" style="right:644px;top:429px">3,696,300</div>
<div class="n" style="right:565px;top:429px">0</div>
<div class="n" style="right:486px;top:429px">0</div>
<div class="n" style="right:407px;top:429px">3,448,221</div>
<div class="n" style="right:328px;top:429px">0</div>
<div class="n" style="right:249px;top:429px">0</div>
<div class="n" style="right:170px;top:429px">0</div>
<div class="n" style="right:91px;top:429px">0</div>
<div class="n" style="right:12px;top:429px">0</div>
<div class="a" style="left:59px;top:445px;width:131px;height:14px;background:#ece7f4"></div>
<div class="a" style="left:191px;top:445px;width:1105px;height:14px;background:#ece7f4"></div>
<div class="a" style="left:59px;top:459px;width:1237px;height:1px;background:#bdbdbd"></div>
<div class="k" style="left:62px;top:444px"><span style="font-size:11px;display:inline-block;transform:scaleX(0.78);transform-origin:0 50%">53004500</span></div>
<div class="k" style="right:1118px;top:444px">견본비</div>
<div class="n" style="right:1040px;top:444px">0</div>
<div class="n" style="right:961px;top:444px">0</div>
<div class="n" style="right:882px;top:444px">26,245,477</div>
<div class="n" style="right:802px;top:444px">1,079,538</div>
<div class="n" style="right:723px;top:444px">3,513,580</div>
<div class="n" style="right:644px;top:444px">3,696,300</div>
<div class="n" style="right:565px;top:444px">0</div>
<div class="n" style="right:486px;top:444px">0</div>
<div class="n" style="right:407px;top:444px">3,448,221</div>
<div class="n" style="right:328px;top:444px">0</div>
<div class="n" style="right:249px;top:444px">0</div>
<div class="n" style="right:170px;top:444px">0</div>
<div class="n" style="right:91px;top:444px">0</div>
<div class="n" style="right:12px;top:444px">0</div>
<div class="a" style="left:59px;top:460px;width:131px;height:14px;background:#e3eafb"></div>
<div class="a" style="left:191px;top:460px;width:1105px;height:14px;background:#ffffff"></div>
<div class="a" style="left:59px;top:474px;width:1237px;height:1px;background:#bdbdbd"></div>
<div class="k" style="left:62px;top:459px"><span style="font-size:11px;display:inline-block;transform:scaleX(0.78);transform-origin:0 50%">53004601</span></div>
<div class="k" style="right:1118px;top:459px">국내운반비</div>
<div class="n" style="right:1040px;top:459px">343,550</div>
<div class="n" style="right:961px;top:459px">19,500</div>
<div class="n" style="right:882px;top:459px">37,369,750</div>
<div class="n" style="right:802px;top:459px">0</div>
<div class="n" style="right:723px;top:459px">1,753,500</div>
<div class="n" style="right:644px;top:459px">403,710</div>
<div class="n" style="right:565px;top:459px">0</div>
<div class="n" style="right:486px;top:459px">185,960</div>
<div class="n" style="right:407px;top:459px">1,304,710</div>
<div class="n" style="right:328px;top:459px">0</div>
<div class="n" style="right:249px;top:459px">0</div>
<div class="n" style="right:170px;top:459px">160,000</div>
<div class="n" style="right:91px;top:459px">0</div>
<div class="n" style="right:12px;top:459px">160,000</div>
<div class="a" style="left:59px;top:475px;width:131px;height:14px;background:#e3eafb"></div>
<div class="a" style="left:191px;top:475px;width:1105px;height:14px;background:#ffffff"></div>
<div class="a" style="left:59px;top:489px;width:1237px;height:1px;background:#bdbdbd"></div>
<div class="k" style="left:62px;top:474px"><span style="font-size:11px;display:inline-block;transform:scaleX(0.78);transform-origin:0 50%">53004602</span></div>
<div class="k" style="right:1118px;top:474px">국외운반비</div>
<div class="n" style="right:1040px;top:474px">0</div>
<div class="n" style="right:961px;top:474px">0</div>
<div class="n" style="right:882px;top:474px">17,197,738</div>
<div class="n" style="right:802px;top:474px">0</div>
<div class="n" style="right:723px;top:474px">52,960</div>
<div class="n" style="right:644px;top:474px">0</div>
<div class="n" style="right:565px;top:474px">0</div>
<div class="n" style="right:486px;top:474px">887,910</div>
<div class="n" style="right:407px;top:474px">188,074</div>
<div class="n" style="right:328px;top:474px">0</div>
<div class="n" style="right:249px;top:474px">0</div>
<div class="n" style="right:170px;top:474px">0</div>
<div class="n" style="right:91px;top:474px">0</div>
<div class="n" style="right:12px;top:474px">0</div>
<div class="a" style="left:59px;top:490px;width:131px;height:13px;background:#ece7f4"></div>
<div class="a" style="left:191px;top:490px;width:1105px;height:13px;background:#ece7f4"></div>
<div class="a" style="left:59px;top:503px;width:1237px;height:1px;background:#bdbdbd"></div>
<div class="k" style="left:62px;top:489px"><span style="font-size:11px;display:inline-block;transform:scaleX(0.78);transform-origin:0 50%">53004600</span></div>
<div class="k" style="right:1118px;top:489px">운반비</div>
<div class="n" style="right:1040px;top:489px">343,550</div>
<div class="n" style="right:961px;top:489px">19,500</div>
<div class="n" style="right:882px;top:489px">54,567,488</div>
<div class="n" style="right:802px;top:489px">0</div>
<div class="n" style="right:723px;top:489px">1,806,460</div>
<div class="n" style="right:644px;top:489px">403,710</div>
<div class="n" style="right:565px;top:489px">0</div>
<div class="n" style="right:486px;top:489px">1,073,870</div>
<div class="n" style="right:407px;top:489px">1,492,784</div>
<div class="n" style="right:328px;top:489px">0</div>
<div class="n" style="right:249px;top:489px">0</div>
<div class="n" style="right:170px;top:489px">160,000</div>
<div class="n" style="right:91px;top:489px">0</div>
<div class="n" style="right:12px;top:489px">160,000</div>
<div class="a" style="left:59px;top:504px;width:131px;height:14px;background:#e3eafb"></div>
<div class="a" style="left:191px;top:504px;width:1105px;height:14px;background:#ffffff"></div>
<div class="a" style="left:59px;top:518px;width:1237px;height:1px;background:#bdbdbd"></div>
<div class="k" style="left:62px;top:504px"><span style="font-size:11px;display:inline-block;transform:scaleX(0.78);transform-origin:0 50%">53005000</span></div>
<div class="k" style="right:1118px;top:504px">수출제비</div>
<div class="n" style="right:1040px;top:504px">0</div>
<div class="n" style="right:961px;top:504px">0</div>
<div class="n" style="right:882px;top:504px">61,023,713</div>
<div class="n" style="right:802px;top:504px">0</div>
<div class="n" style="right:723px;top:504px">0</div>
<div class="n" style="right:644px;top:504px">0</div>
<div class="n" style="right:565px;top:504px">0</div>
<div class="n" style="right:486px;top:504px">0</div>
<div class="n" style="right:407px;top:504px">0</div>
<div class="n" style="right:328px;top:504px">0</div>
<div class="n" style="right:249px;top:504px">0</div>
<div class="n" style="right:170px;top:504px">0</div>
<div class="n" style="right:91px;top:504px">0</div>
<div class="n" style="right:12px;top:504px">0</div>
<div class="a" style="left:59px;top:519px;width:131px;height:14px;background:#ece7f4"></div>
<div class="a" style="left:191px;top:519px;width:1105px;height:14px;background:#ece7f4"></div>
<div class="a" style="left:59px;top:533px;width:1237px;height:1px;background:#bdbdbd"></div>
<div class="k" style="left:62px;top:519px"><span style="font-size:11px;display:inline-block;transform:scaleX(0.78);transform-origin:0 50%">53005000</span></div>
<div class="k" style="right:1118px;top:519px">수출제비</div>
<div class="n" style="right:1040px;top:519px">0</div>
<div class="n" style="right:961px;top:519px">0</div>
<div class="n" style="right:882px;top:519px">61,023,713</div>
<div class="n" style="right:802px;top:519px">0</div>
<div class="n" style="right:723px;top:519px">0</div>
<div class="n" style="right:644px;top:519px">0</div>
<div class="n" style="right:565px;top:519px">0</div>
<div class="n" style="right:486px;top:519px">0</div>
<div class="n" style="right:407px;top:519px">0</div>
<div class="n" style="right:328px;top:519px">0</div>
<div class="n" style="right:249px;top:519px">0</div>
<div class="n" style="right:170px;top:519px">0</div>
<div class="n" style="right:91px;top:519px">0</div>
<div class="n" style="right:12px;top:519px">0</div>
<div class="a" style="left:59px;top:534px;width:131px;height:14px;background:#e3eafb"></div>
<div class="a" style="left:191px;top:534px;width:1105px;height:14px;background:#ffffff"></div>
<div class="a" style="left:59px;top:548px;width:1237px;height:1px;background:#bdbdbd"></div>
<div class="k" style="left:62px;top:534px"><span style="font-size:11px;display:inline-block;transform:scaleX(0.78);transform-origin:0 50%">53005602</span></div>
<div class="k" style="right:1118px;top:534px">인력개발비</div>
<div class="n" style="right:1040px;top:534px">0</div>
<div class="n" style="right:961px;top:534px">0</div>
<div class="n" style="right:882px;top:534px">2,400,000</div>
<div class="n" style="right:802px;top:534px">0</div>
<div class="n" style="right:723px;top:534px">0</div>
<div class="n" style="right:644px;top:534px">0</div>
<div class="n" style="right:565px;top:534px">0</div>
<div class="n" style="right:486px;top:534px">0</div>
<div class="n" style="right:407px;top:534px">0</div>
<div class="n" style="right:328px;top:534px">0</div>
<div class="n" style="right:249px;top:534px">0</div>
<div class="n" style="right:170px;top:534px">0</div>
<div class="n" style="right:91px;top:534px">0</div>
<div class="n" style="right:12px;top:534px">0</div>
<div class="a" style="left:59px;top:549px;width:131px;height:14px;background:#ece7f4"></div>
<div class="a" style="left:191px;top:549px;width:1105px;height:14px;background:#ece7f4"></div>
<div class="k" style="left:62px;top:549px"><span style="font-size:11px;display:inline-block;transform:scaleX(0.78);transform-origin:0 50%">53005600</span></div>
<div class="k" style="right:1118px;top:549px">연구비</div>
<div class="n" style="right:1040px;top:549px">0</div>
<div class="n" style="right:961px;top:549px">0</div>
<div class="n" style="right:882px;top:549px">2,400,000</div>
<div class="n" style="right:802px;top:549px">0</div>
<div class="n" style="right:723px;top:549px">0</div>
<div class="n" style="right:644px;top:549px">0</div>
<div class="n" style="right:565px;top:549px">0</div>
<div class="n" style="right:486px;top:549px">0</div>
<div class="n" style="right:407px;top:549px">0</div>
<div class="n" style="right:328px;top:549px">0</div>
<div class="n" style="right:249px;top:549px">0</div>
<div class="n" style="right:170px;top:549px">0</div>
<div class="n" style="right:91px;top:549px">0</div>
<div class="n" style="right:12px;top:549px">0</div>
<div class="a" style="left:6px;top:100px;width:52px;height:463px;background:#fdebcf"></div>
<div class="t" style="left:8px;top:323px;font-size:10px;color:#111">판관비</div>
<div class="a" style="left:6px;top:564px;width:1290px;height:14px;background:#ece7f4"></div>
<div class="a" style="left:6px;top:563px;width:1290px;height:1px;background:#bdbdbd"></div>
<div class="k" style="left:8px;top:564px">구분소계</div>
<div class="n" style="right:1040px;top:564px">16,871,601</div>
<div class="n" style="right:961px;top:564px">189,537,246</div>
<div class="n" style="right:882px;top:564px">1,337,821,131</div>
<div class="n" style="right:802px;top:564px">3,899,538</div>
<div class="n" style="right:723px;top:564px">198,435,357</div>
<div class="n" style="right:644px;top:564px">96,822,559</div>
<div class="n" style="right:565px;top:564px">0</div>
<div class="n" style="right:486px;top:564px">1,355,167</div>
<div class="n" style="right:407px;top:564px">124,192,863</div>
<div class="n" style="right:328px;top:564px">23,883,974</div>
<div class="n" style="right:249px;top:564px">121,265</div>
<div class="n" style="right:170px;top:564px">160,000</div>
<div class="n" style="right:91px;top:564px">53,417,416</div>
<div class="n" style="right:12px;top:564px">160,000</div>
<div class="a" style="left:6px;top:579px;width:1290px;height:15px;background:#d1cae1"></div>
<div class="a" style="left:6px;top:578px;width:1290px;height:1px;background:#bdbdbd"></div>
<div class="k" style="left:8px;top:578.2px">총계</div>
<div class="n" style="right:1040px;top:579px">16,871,601</div>
<div class="n" style="right:961px;top:579px">189,537,246</div>
<div class="n" style="right:882px;top:579px">1,337,821,131</div>
<div class="n" style="right:802px;top:579px">3,899,538</div>
<div class="n" style="right:723px;top:579px">198,435,357</div>
<div class="n" style="right:644px;top:579px">96,822,559</div>
<div class="n" style="right:565px;top:579px">0</div>
<div class="n" style="right:486px;top:579px">1,355,167</div>
<div class="n" style="right:407px;top:579px">124,192,863</div>
<div class="n" style="right:328px;top:579px">23,883,974</div>
<div class="n" style="right:249px;top:579px">121,265</div>
<div class="n" style="right:170px;top:579px">160,000</div>
<div class="n" style="right:91px;top:579px">53,417,416</div>
<div class="n" style="right:12px;top:579px">160,000</div>
<div class="a" style="left:58px;top:100px;width:1px;height:494px;background:#a9a9a9"></div>
<div class="a" style="left:111px;top:100px;width:1px;height:494px;background:#a9a9a9"></div>
<div class="a" style="left:190px;top:100px;width:1px;height:494px;background:#a9a9a9"></div>
<div class="a" style="left:269px;top:100px;width:1px;height:494px;background:#a9a9a9"></div>
<div class="a" style="left:348px;top:100px;width:1px;height:494px;background:#a9a9a9"></div>
<div class="a" style="left:427px;top:100px;width:1px;height:494px;background:#a9a9a9"></div>
<div class="a" style="left:507px;top:100px;width:1px;height:494px;background:#a9a9a9"></div>
<div class="a" style="left:586px;top:100px;width:1px;height:494px;background:#a9a9a9"></div>
<div class="a" style="left:665px;top:100px;width:1px;height:494px;background:#a9a9a9"></div>
<div class="a" style="left:744px;top:100px;width:1px;height:494px;background:#a9a9a9"></div>
<div class="a" style="left:823px;top:100px;width:1px;height:494px;background:#a9a9a9"></div>
<div class="a" style="left:902px;top:100px;width:1px;height:494px;background:#a9a9a9"></div>
<div class="a" style="left:981px;top:100px;width:1px;height:494px;background:#a9a9a9"></div>
<div class="a" style="left:1060px;top:100px;width:1px;height:494px;background:#a9a9a9"></div>
<div class="a" style="left:1139px;top:100px;width:1px;height:494px;background:#a9a9a9"></div>
<div class="a" style="left:1218px;top:100px;width:1px;height:494px;background:#a9a9a9"></div>
<div class="a" style="left:5px;top:84px;width:1px;height:514px;background:#777a7c"></div>
<div class="a" style="left:5px;top:594px;width:1291px;height:1px;background:#777a7c"></div>
</body></html>
